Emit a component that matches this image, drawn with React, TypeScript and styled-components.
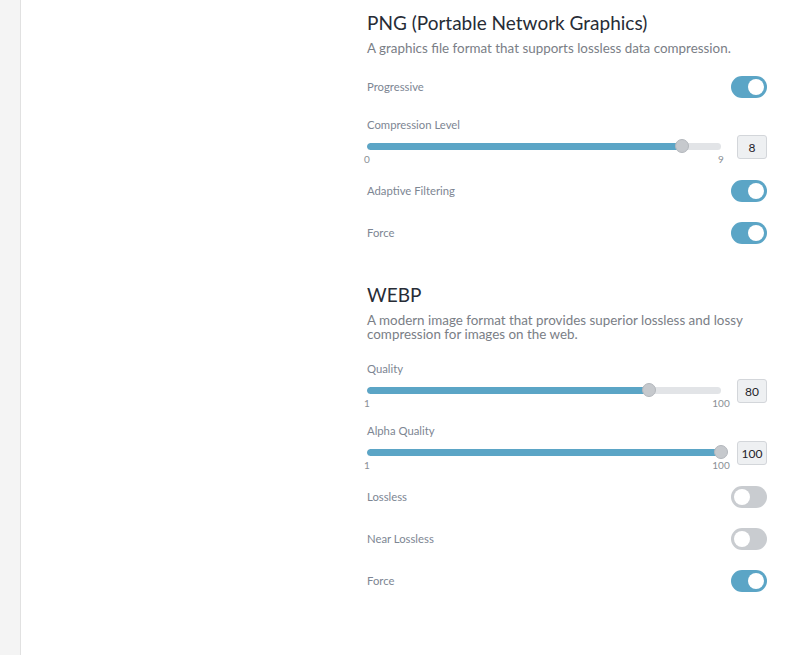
import React from "react";
import styled, { createGlobalStyle } from "styled-components";

const Global = createGlobalStyle`
  html, body { margin: 0; padding: 0; background: #ffffff; }
  body { font-family: Lato, "Open Sans", Arial, sans-serif; }
  * { box-sizing: border-box; }
`;

const Page = styled.div`
  display: flex;
  min-height: 655px;
`;

const Sidebar = styled.aside`
  width: 21px;
  flex: none;
  background: #f4f4f4;
  border-right: 1px solid #e1e1e1;
`;

const Main = styled.main`
  flex: 1;
  padding-left: 346px;
`;

const Column = styled.div`
  width: 400px;
`;

const Section = styled.section<{ $top: number }>`
  padding-top: ${(p) => p.$top}px;
`;

const Heading = styled.h2`
  margin: 0;
  font-size: 19px;
  line-height: 24px;
  font-weight: 400;
  color: #272c36;
`;

const Description = styled.p`
  margin: 6px 0 0;
  font-size: 13.4px;
  line-height: 14px;
  color: #7a7e86;
`;

const Field = styled.div<{ $top: number }>`
  margin-top: ${(p) => p.$top}px;
`;

const ToggleRow = styled.div`
  display: flex;
  align-items: center;
  justify-content: space-between;
  height: 22px;
`;

const Label = styled.div`
  font-size: 11.3px;
  line-height: 14px;
  color: #7d8693;
`;

const Switch = styled.div<{ $on: boolean }>`
  width: 36px;
  height: 22px;
  border-radius: 11px;
  background: ${(p) => (p.$on ? "#5ba5c6" : "#c9ccd0")};
  display: flex;
  align-items: center;
  justify-content: ${(p) => (p.$on ? "flex-end" : "flex-start")};
  padding: 0 3px;
`;

const Knob = styled.span`
  width: 16px;
  height: 16px;
  border-radius: 50%;
  background: #ffffff;
`;

const SliderRow = styled.div`
  display: flex;
  align-items: flex-start;
  justify-content: space-between;
  margin-top: 3px;
  height: 30px;
`;

const SliderCol = styled.div`
  width: 354px;
  padding-top: 4px;
`;

const TrackArea = styled.div`
  position: relative;
  height: 14px;
  display: flex;
  align-items: center;
`;

const Track = styled.div`
  width: 100%;
  height: 7px;
  border-radius: 4px;
  background: #e2e4e7;
  overflow: hidden;
`;

const Fill = styled.div`
  height: 100%;
  background: #5ba5c6;
  border-radius: 4px;
`;

const Thumb = styled.span`
  position: absolute;
  top: 0;
  width: 14px;
  height: 14px;
  margin-left: -7px;
  border-radius: 50%;
  background: #c6c9cd;
  border: 1px solid #b3b7bc;
`;

const Range = styled.div`
  display: flex;
  justify-content: space-between;
  height: 12px;
  font-size: 10px;
  line-height: 12px;
  color: #8a8f96;
`;

const RangeMin = styled.span`
  transform: translateX(-50%);
`;

const RangeMax = styled.span`
  transform: translateX(50%);
`;

const ValueBox = styled.div`
  width: 30px;
  height: 24px;
  border: 1px solid #d3d6da;
  border-radius: 3px;
  background: #eef0f2;
  display: flex;
  align-items: center;
  justify-content: center;
  font-size: 12px;
  color: #1f232a;
`;

function Toggle({ label, on, top }: { label: string; on: boolean; top: number }) {
  return (
    <Field $top={top}>
      <ToggleRow>
        <Label>{label}</Label>
        <Switch $on={on}>
          <Knob />
        </Switch>
      </ToggleRow>
    </Field>
  );
}

function Slider({
  label,
  min,
  max,
  value,
  top,
}: {
  label: string;
  min: number;
  max: number;
  value: number;
  top: number;
}) {
  const pct = ((value - min) / (max - min)) * 100;
  return (
    <Field $top={top}>
      <Label>{label}</Label>
      <SliderRow>
        <SliderCol>
          <TrackArea>
            <Track>
              <Fill style={{ width: `${pct}%` }} />
            </Track>
            <Thumb style={{ left: `${pct}%` }} />
          </TrackArea>
          <Range>
            <RangeMin>{min}</RangeMin>
            <RangeMax>{max}</RangeMax>
          </Range>
        </SliderCol>
        <ValueBox>{value}</ValueBox>
      </SliderRow>
    </Field>
  );
}

export default function App() {
  return (
    <>
      <Global />
      <Page>
        <Sidebar />
        <Main>
          <Column>
            <Section $top={11}>
              <Heading>PNG (Portable Network Graphics)</Heading>
              <Description>A graphics file format that supports lossless data compression.</Description>
              <Toggle label="Progressive" on top={21} />
              <Slider label="Compression Level" min={0} max={9} value={8} top={20} />
              <Toggle label="Adaptive Filtering" on top={15} />
              <Toggle label="Force" on top={20} />
            </Section>
            <Section $top={39}>
              <Heading>WEBP</Heading>
              <Description>
                A modern image format that provides superior lossless and lossy compression for images on the web.
              </Description>
              <Slider label="Quality" min={1} max={100} value={80} top={21} />
              <Slider label="Alpha Quality" min={1} max={100} value={100} top={15} />
              <Toggle label="Lossless" on={false} top={15} />
              <Toggle label="Near Lossless" on={false} top={20} />
              <Toggle label="Force" on top={20} />
            </Section>
          </Column>
        </Main>
      </Page>
    </>
  );
}
